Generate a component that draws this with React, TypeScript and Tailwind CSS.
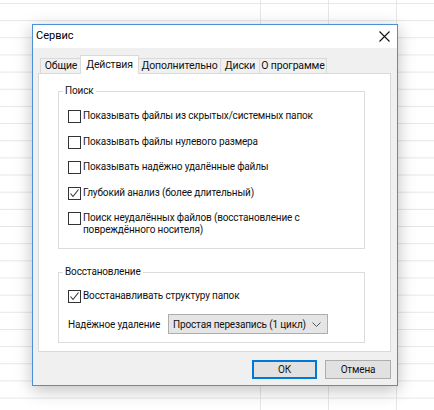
import React from "react";

type CheckProps = { label: React.ReactNode; checked?: boolean };

// 13px Win32-style checkbox with the label right beside it
function Check({ label, checked }: CheckProps) {
  return (
    <div className="flex items-start">
      <div className="flex h-[13px] w-[13px] shrink-0 items-center justify-center border border-[#333] bg-white">
        {checked && (
          <svg width="11" height="11" viewBox="0 0 11 11">
            <polyline
              points="1.5,5.5 4,8.5 9.5,1.5"
              fill="none"
              stroke="#333"
              strokeWidth="1.1"
            />
          </svg>
        )}
      </div>
      <span className="ml-[2px] whitespace-nowrap leading-[12px]">{label}</span>
    </div>
  );
}

function Group({
  title,
  className,
  children,
}: {
  title: string;
  className?: string;
  children: React.ReactNode;
}) {
  return (
    <div className={"relative border border-[#dcdcdc] " + (className ?? "")}>
      <span className="absolute -top-[9px] left-[4px] bg-white px-[2px] leading-[15px]">
        {title}
      </span>
      {children}
    </div>
  );
}

const tabs = [
  { name: "Общие", w: "w-[42px]" },
  { name: "Действия", w: "w-[59px]", active: true },
  { name: "Дополнительно", w: "w-[83px]" },
  { name: "Диски", w: "w-[40px]" },
  { name: "О программе", w: "w-[68px]" },
];

export default function App() {
  return (
    <div className="h-[410px] w-[434px] overflow-hidden bg-white bg-[linear-gradient(to_bottom,#e6e6e6_1px,transparent_1px)] bg-[length:100%_17.17px] bg-[position:0_3px] font-['Roboto',sans-serif] text-[10px] tracking-[-0.15px] text-[#111]">
      <div className="h-full w-full bg-[linear-gradient(to_right,transparent_260px,#e6e6e6_260px,#e6e6e6_261px,transparent_261px,transparent_328px,#e6e6e6_328px,#e6e6e6_329px,transparent_329px,transparent_396px,#e6e6e6_396px,#e6e6e6_397px,transparent_397px)] pl-[32px] pt-[24px]">
        {/* window */}
        <div className="flex h-[362px] w-[366px] flex-col border border-[#4a8fd8] bg-[#f0f0f0] shadow-[0_4px_16px_rgba(0,0,0,0.26)]">
          {/* title bar */}
          <div className="flex h-[23px] items-center justify-between bg-white pl-[3px] pr-[7px]">
            <span className="text-[11px] tracking-normal text-black">Сервис</span>
            <svg width="11" height="11" viewBox="0 0 11 11">
              <path d="M0.5 0.5 L10.5 10.5 M10.5 0.5 L0.5 10.5" stroke="#111" strokeWidth="1.1" />
            </svg>
          </div>

          <div className="flex flex-1 flex-col pl-[5px] pr-[6px] pt-[7px]">
            {/* tab strip */}
            <div className="relative z-10 flex h-[18px] items-end pl-[2px]">
              {tabs.map((t) =>
                t.active ? (
                  <div
                    key={t.name}
                    className={
                      t.w +
                      " -mx-px -mb-px flex h-[19px] shrink-0 items-center justify-center whitespace-nowrap border border-b-0 border-[#d9d9d9] bg-white pb-px text-[10.5px]"
                    }
                  >
                    {t.name}
                  </div>
                ) : (
                  <div
                    key={t.name}
                    className={
                      t.w +
                      " -mr-px flex h-[15px] shrink-0 items-center justify-center whitespace-nowrap border border-b-0 border-[#d9d9d9] bg-[#f0f0f0] pt-px text-[10.5px] leading-none"
                    }
                  >
                    {t.name}
                  </div>
                )
              )}
            </div>

            {/* tab page */}
            <div className="h-[279px] border border-[#d9d9d9] bg-white pl-[19px] pr-[25px] pt-[17px]">
              <Group title="Поиск" className="h-[158px]">
                <div className="flex flex-col gap-[12.5px] pl-[9px] pt-[18px]">
                  <Check label="Показывать файлы из скрытых/системных папок" />
                  <Check label="Показывать файлы нулевого размера" />
                  <Check label="Показывать надёжно удалённые файлы" />
                  <Check checked label="Глубокий анализ (более длительный)" />
                  <Check
                    label={
                      <>
                        Поиск неудалённых файлов (восстановление с
                        <br />
                        повреждённого носителя)
                      </>
                    }
                  />
                </div>
              </Group>

              <Group title="Восстановление" className="mt-[23px] h-[71px]">
                <div className="flex flex-col pl-[9px] pt-[17px]">
                  <Check checked label="Восстанавливать структуру папок" />
                  <div className="mt-[11px] flex items-center">
                    <span className="w-[100px] whitespace-nowrap">Надёжное удаление</span>
                    <div className="flex h-[20px] w-[160px] items-center justify-between border border-[#adadad] bg-[#e5e5e5] pl-[4px] pr-[6px]">
                      <span className="whitespace-nowrap">Простая перезапись (1 цикл)</span>
                      <svg width="9" height="5" viewBox="0 0 9 5">
                        <polyline points="0.5,0.5 4.5,4.5 8.5,0.5" fill="none" stroke="#555" strokeWidth="1" />
                      </svg>
                    </div>
                  </div>
                </div>
              </Group>
            </div>

            {/* dialog buttons */}
            <div className="mt-[8px] flex justify-end gap-[8px]">
              <button className="h-[19px] w-[65px] border-2 border-[#0078d7] bg-[#e1e1e1] leading-none">
                ОК
              </button>
              <button className="h-[19px] w-[66px] border border-[#adadad] bg-[#e1e1e1] leading-none">
                Отмена
              </button>
            </div>
          </div>
        </div>
      </div>
    </div>
  );
}
